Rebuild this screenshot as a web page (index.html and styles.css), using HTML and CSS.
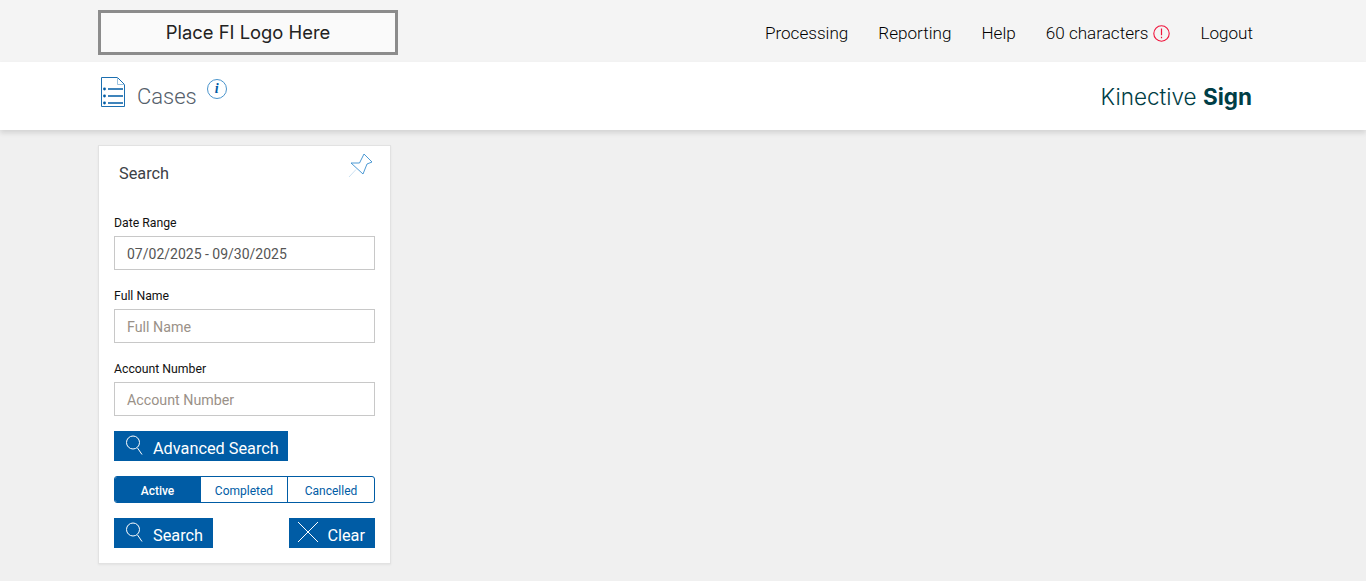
FILE: index.html
```html
<!DOCTYPE html>
<html lang="en">
<head>
<meta charset="utf-8">
<title>Cases</title>
<link rel="stylesheet" href="styles.css">
</head>
<body>
<header class="topbar">
  <div class="logo-box">Place FI Logo Here</div>
  <nav class="nav">
    <a class="nav-link">Processing</a>
    <a class="nav-link">Reporting</a>
    <a class="nav-link">Help</a>
    <a class="nav-link nav-alert">60 characters
      <svg class="alert-icon" viewBox="0 0 17 17" width="17" height="17"><circle cx="8.5" cy="8.5" r="7.7" fill="none" stroke="#f0143c" stroke-width="1.1"/><path d="M8.5 3.6v6.6M8.5 11.8v1.5" stroke="#f0143c" stroke-width="1.2" fill="none"/></svg>
    </a>
    <a class="nav-link">Logout</a>
  </nav>
</header>
<div class="subbar">
  <div class="title-group">
    <svg class="doc-icon" viewBox="0 0 24 30" width="24" height="30"><path d="M.5.5h16l7 7v22H.5z" fill="none" stroke="#1c6fb0"/><path d="M16.5.5v7h7" fill="none" stroke="#7fb2d8" stroke-width=".8"/><path d="M7 12h15M7 19h15M7 26h15" stroke="#005ca5" stroke-width="1.4"/><circle cx="3.5" cy="12" r="1.4" fill="#005ca5"/><circle cx="3.5" cy="19" r="1.4" fill="#005ca5"/><circle cx="3.5" cy="26" r="1.4" fill="#005ca5"/></svg>
    <h1 class="page-title">Cases</h1>
    <span class="info-icon">i</span>
  </div>
  <div class="brand">Kinective <b>Sign</b></div>
</div>
<main class="content">
  <section class="card">
    <div class="card-head">
      <h2 class="card-title">Search</h2>
      <svg class="pin-icon" viewBox="0 0 27 27" width="27" height="27"><path d="M5 10l8.500 0L18 1l8 8-5 2-4 10z" fill="none" stroke="#3a8fcf" stroke-width=".9"/><path d="M10 16.500L3 24" stroke="#bcd8ee" stroke-width=".8" fill="none"/></svg>
    </div>
    <label class="field-label">Date Range</label>
    <div class="field field-value">07/02/2025 - 09/30/2025</div>
    <label class="field-label">Full Name</label>
    <div class="field field-placeholder">Full Name</div>
    <label class="field-label">Account Number</label>
    <div class="field field-placeholder">Account Number</div>
    <div class="btn-row">
      <button class="btn btn-advanced">
        <svg class="btn-icon" viewBox="0 0 18 20" width="18" height="20"><circle cx="7" cy="7.500" r="6.500" fill="none" stroke="#fff" stroke-width="1"/><path d="M11.500 13l4.500 6.500" stroke="#fff" stroke-width="1" fill="none"/></svg>
        <span class="btn-text">Advanced Search</span>
      </button>
    </div>
    <div class="segments">
      <span class="segment segment-active">Active</span>
      <span class="segment">Completed</span>
      <span class="segment">Cancelled</span>
    </div>
    <div class="actions">
      <button class="btn">
        <svg class="btn-icon" viewBox="0 0 18 20" width="18" height="20"><circle cx="7" cy="7.500" r="6.500" fill="none" stroke="#fff" stroke-width="1"/><path d="M11.500 13l4.500 6.500" stroke="#fff" stroke-width="1" fill="none"/></svg>
        <span class="btn-text">Search</span>
      </button>
      <button class="btn btn-clear">
        <svg class="btn-icon-x" viewBox="0 0 22 22" width="22" height="22"><path d="M1 1l20 20M21 1L1 21" stroke="#fff" stroke-width="1" fill="none"/></svg>
        <span class="btn-text">Clear</span>
      </button>
    </div>
  </section>
</main>
</body>
</html>
```
FILE: styles.css
```css
* { box-sizing: border-box; }
html, body { margin: 0; height: 100%; }
body {
  background: #f0f0f0;
  font-family: Roboto, "Liberation Sans", sans-serif;
  color: #111;
  overflow: hidden;
}
.topbar {
  height: 62px;
  background: #f4f4f4;
  padding: 10px 113px 0 98px;
  display: flex;
  justify-content: space-between;
  align-items: flex-start;
}
.logo-box {
  width: 300px;
  height: 45px;
  border: 3px solid #8c8c8c;
  background: #fafafa;
  display: flex;
  align-items: center;
  justify-content: center;
  font-family: Inter, sans-serif;
  font-size: 18.400px;
  color: #222;
  padding-bottom: 2px;
}
.nav { display: flex; gap: 30px; padding-top: 12px; }
.nav-link { font-size: 17.100px; font-weight: 300; line-height: 22px; color: #000; white-space: nowrap; }
.nav-alert { display: flex; align-items: center; gap: 5px; }
.alert-icon { display: block; }
.subbar {
  height: 68px;
  background: #fff;
  box-shadow: 0 3px 5px rgba(0,0,0,.12);
  padding: 0 114px 0 98px;
  display: flex;
  justify-content: space-between;
  position: relative;
}
.title-group { display: flex; align-items: flex-start; padding: 15px 0 0 3px; }
.doc-icon { display: block; }
.page-title {
  margin: 6px 0 0 12px;
  font-size: 22px;
  font-weight: 300;
  line-height: 28px;
  color: #55606b;
}
.info-icon {
  width: 20px;
  height: 20px;
  margin: 2px 0 0 10px;
  border: 1px solid #4a94cc;
  border-radius: 50%;
  color: #005ca5;
  font: italic bold 14px/18px "Liberation Serif", serif;
  text-align: center;
}
.brand {
  font-family: Inter, sans-serif;
  font-weight: 300;
  font-size: 22.500px;
  line-height: 28px;
  color: #003e46;
  padding-top: 21px;
}
.brand b { font-weight: 700; }
.content { padding: 15px 0 0 98px; }
.card {
  width: 293px;
  height: 419px;
  background: #fff;
  border: 1px solid #e2e2e2;
  box-shadow: 0 1px 2px rgba(0,0,0,.06);
  padding: 0 15px;
}
.card-head {
  height: 69px;
  display: flex;
  justify-content: space-between;
  padding: 7px 2px 0 5px;
}
.card-title {
  margin: 11px 0 0;
  font-size: 16.300px;
  font-weight: 400;
  line-height: 20px;
  color: #3c4146;
}
.pin-icon { display: block; }
.field-label {
  display: block;
  font-size: 12.250px;
  line-height: 16px;
  height: 16px;
  margin: 0 0 5px;
  color: #111;
}
.field {
  height: 34px;
  border: 1px solid #c8c8c8;
  padding: 0 12px;
  font-size: 14px;
  line-height: 34px;
  margin-bottom: 18px;
  background: #fff;
}
.field-value { color: #555; }
.field-placeholder { color: #9a9188; font-size: 14.250px; }
.btn-row { display: flex; margin-top: -3px; }
.btn {
  height: 30px;
  border: 0;
  background: #005ca5;
  color: #fff;
  font-family: Roboto, sans-serif;
  font-size: 16.300px;
  display: inline-flex;
  align-items: center;
  padding: 0 10px 0 12px;
  line-height: 20px;
}
.btn-advanced { padding-right: 9px; }
.btn-text { display: block; padding-top: 6px; }
.btn-icon { margin: -2px 9px 0 0; display: block; }
.btn-icon-x { margin: -2px 8px 0 -4px; display: block; }
.btn-clear { padding-right: 10px; }
.segments {
  display: flex;
  height: 27px;
  margin-top: 15px;
  border: 1px solid #005ca5;
  border-radius: 3px;
  overflow: hidden;
}
.segment {
  flex: 1 1 0;
  font-size: 12px;
  line-height: 28px;
  text-align: center;
  color: #005ca5;
  border-right: 1px solid #005ca5;
}
.segment:last-child { border-right: 0; }
.segment-active { flex: 0 0 86px; background: #005ca5; color: #fff; font-weight: 500; }
.actions {
  display: flex;
  justify-content: space-between;
  margin-top: 15px;
}
```
